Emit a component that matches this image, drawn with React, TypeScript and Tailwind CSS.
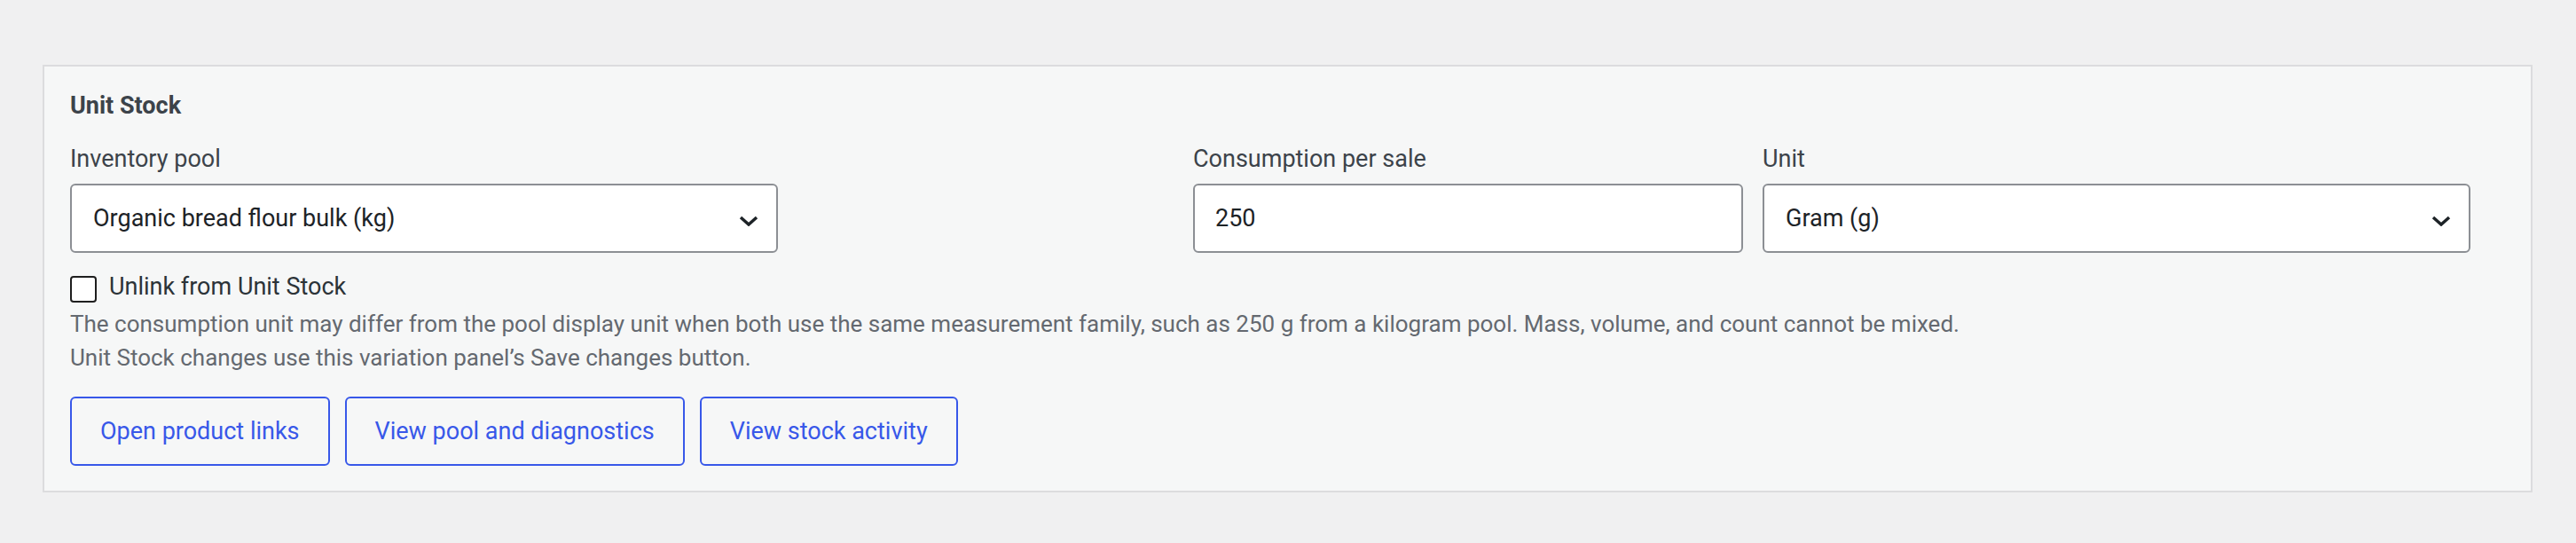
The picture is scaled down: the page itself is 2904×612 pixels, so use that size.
import React from "react";

const ACTIONS = [
  "Open product links",
  "View pool and diagnostics",
  "View stock activity",
];

function Chevron() {
  return (
    <svg
      width="22"
      height="12"
      viewBox="0 0 22 12"
      fill="none"
      className="translate-y-[3px] shrink-0"
    >
      <polyline
        points="2,2 11,10 20,2"
        stroke="#1d2327"
        strokeWidth="3.5"
        strokeLinejoin="miter"
      />
    </svg>
  );
}

function FakeSelect({ value }: { value: string }) {
  return (
    <div className="h-[78px] flex items-center justify-between bg-white border-2 border-[#8c8f94] rounded-[6px] pl-[24px] pr-[20px] text-[#1d2327] text-[27px]">
      <span>{value}</span>
      <Chevron />
    </div>
  );
}

function FieldLabel({ children }: { children: React.ReactNode }) {
  return (
    <label className="block text-[27px] leading-[36px] text-[#3c434a] mb-[10px]">
      {children}
    </label>
  );
}

export default function App() {
  return (
    <div
      className="min-h-screen bg-[#f0f0f1] pt-[73px] pl-[48px] pr-[49px]"
      style={{ fontFamily: "Roboto, 'Noto Sans', sans-serif" }}
    >
      <section className="border-2 border-[#dcdcde] bg-[#f6f7f7] pl-[29px] pr-[68px] pt-[26px] pb-[28px]">
        <h3 className="text-[27px] leading-[36px] font-bold text-[#3c434a]">
          Unit Stock
        </h3>

        {/* pool + consumption fields */}
        <div className="flex justify-between mt-[24px]">
          <div className="w-[798px]">
            <FieldLabel>Inventory pool</FieldLabel>
            <FakeSelect value="Organic bread flour bulk (kg)" />
          </div>
          <div className="flex gap-[22px]">
            <div className="w-[620px]">
              <FieldLabel>Consumption per sale</FieldLabel>
              <input
                readOnly
                value="250"
                className="w-full h-[78px] bg-white border-2 border-[#8c8f94] rounded-[6px] px-[23px] text-[27px] text-[#1d2327] outline-none"
              />
            </div>
            <div className="w-[798px]">
              <FieldLabel>Unit</FieldLabel>
              <FakeSelect value="Gram (g)" />
            </div>
          </div>
        </div>

        {/* unlink */}
        <label className="flex items-start gap-[14px] mt-[20px] text-[27px] leading-[36px] text-[#2c3338]">
          <span className="mt-[6px] w-[30px] h-[30px] bg-white border-2 border-[#1e1e1e] rounded-[4px] shrink-0" />
          Unlink from Unit Stock
        </label>
        <p className="mt-[5px] text-[26px] leading-[38px] text-[#646970]">
          The consumption unit may differ from the pool display unit when both
          use the same measurement family, such as 250 g from a kilogram pool.
          Mass, volume, and count cannot be mixed.
          <br />
          Unit Stock changes use this variation panel’s Save changes button.
        </p>

        {/* actions */}
        <div className="flex gap-[17px] mt-[25px]">
          {ACTIONS.map((a) => (
            <button
              key={a}
              className="h-[78px] px-[32px] border-2 border-[#3858e9] rounded-[6px] text-[27px] text-[#3858e9] bg-transparent"
            >
              {a}
            </button>
          ))}
        </div>
      </section>
    </div>
  );
}
